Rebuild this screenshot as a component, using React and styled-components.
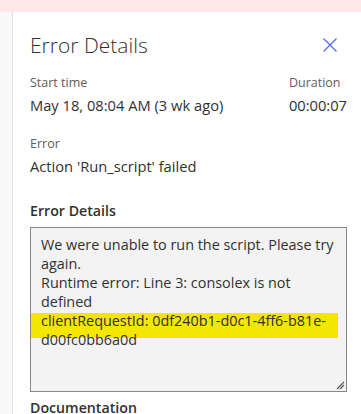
import React from "react"
import styled, { createGlobalStyle } from "styled-components"

const GlobalStyle = createGlobalStyle`
  html, body {
    margin: 0;
    padding: 0;
    background: #ffffff;
    font-family: "Segoe UI", "Open Sans", "Liberation Sans", sans-serif;
    color: #323130;
    overflow: hidden;
  }
`

const Page = styled.div`
  width: 361px;
  height: 414px;
  display: flex;
  flex-direction: column;
  overflow: hidden;
`

const TopBand = styled.div`
  height: 12px;
  flex: none;
  background: #fde7e9;
`

const Body = styled.div`
  flex: 1;
  display: flex;
  min-height: 0;
`

const SideStrip = styled.div`
  width: 12px;
  flex: none;
  background: #f8f8f8;
  border-right: 1px solid #e1dfdd;
`

const Panel = styled.div`
  flex: 1;
  padding: 18px 14px 0 17px;
  display: flex;
  flex-direction: column;
`

const Header = styled.div`
  display: flex;
  align-items: center;
  justify-content: space-between;
  height: 30px;
  flex: none;
`

const Title = styled.h1`
  margin: 0;
  font-size: 21px;
  font-weight: 300;
  color: #323130;
`

const CloseButton = styled.button`
  border: none;
  background: none;
  padding: 0;
  width: 24px;
  height: 24px;
  display: flex;
  align-items: center;
  justify-content: center;
  margin-right: 5px;
  cursor: pointer;
`

const FieldRow = styled.div`
  display: flex;
  justify-content: space-between;
  margin-top: ${(p) => p.$top || 0}px;
  flex: none;
`

const Field = styled.div`
  display: flex;
  flex-direction: column;
  gap: 4px;
`

const Label = styled.div`
  font-size: 12.5px;
  color: #605e5c;
  line-height: 16px;
`

const Value = styled.div`
  font-size: 14.7px;
  color: #323130;
  line-height: 20px;
  white-space: nowrap;
`

const SectionTitle = styled.div`
  font-size: 14.2px;
  font-weight: 600;
  color: #323130;
  line-height: 20px;
  margin-top: ${(p) => p.$top || 0}px;
  flex: none;
`

const DetailsBox = styled.div`
  position: relative;
  margin-top: 6px;
  height: 165px;
  flex: none;
  box-sizing: border-box;
  background: #f3f3f3;
  border: 1px solid #8a8886;
  padding: 7px 0 0 10px;
  font-size: 14.4px;
  line-height: 19px;
  color: #323130;
`

const Line = styled.div`
  position: relative;
  white-space: nowrap;
`

const Highlight = styled.div`
  position: relative;
  margin-left: -10px;
  padding-left: 10px;
  margin-right: 8px;

  &::before {
    content: "";
    position: absolute;
    left: 0;
    right: 0;
    top: 2px;
    height: 25px;
    background: #f3e600;
  }
`

const Grip = styled.svg`
  position: absolute;
  right: 1px;
  bottom: 1px;
`

const CloseIcon = () => (
  <svg width="14" height="14" viewBox="0 0 14 14">
    <path d="M0.5 0.5 L13.5 13.5 M13.5 0.5 L0.5 13.5" stroke="#4f6bed" strokeWidth="1.2" fill="none" />
  </svg>
)

export default function App() {
  return (
    <>
      <GlobalStyle />
      <Page>
        <TopBand />
        <Body>
          <SideStrip />
          <Panel>
            <Header>
              <Title>Error Details</Title>
              <CloseButton aria-label="Close">
                <CloseIcon />
              </CloseButton>
            </Header>
            <FieldRow $top={15}>
              <Field>
                <Label>Start time</Label>
                <Value>May 18, 08:04 AM (3 wk ago)</Value>
              </Field>
              <Field>
                <Label>Duration</Label>
                <Value>00:00:07</Value>
              </Field>
            </FieldRow>
            <FieldRow $top={21}>
              <Field>
                <Label>Error</Label>
                <Value>Action 'Run_script' failed</Value>
              </Field>
            </FieldRow>
            <SectionTitle $top={25}>Error Details</SectionTitle>
            <DetailsBox>
              <Line>We were unable to run the script. Please try</Line>
              <Line>again.</Line>
              <Line>Runtime error: Line 3: consolex is not</Line>
              <Line>defined</Line>
              <Highlight>
                <Line>clientRequestId: 0df240b1-d0c1-4ff6-b81e-</Line>
                <Line>d00fc0bb6a0d</Line>
              </Highlight>
              <Grip width="10" height="10" viewBox="0 0 10 10">
                <path d="M9 2 L2 9 M9 5 L5 9" stroke="#605e5c" strokeWidth="1.3" />
              </Grip>
            </DetailsBox>
            <SectionTitle $top={6}>Documentation</SectionTitle>
          </Panel>
        </Body>
      </Page>
    </>
  )
}
